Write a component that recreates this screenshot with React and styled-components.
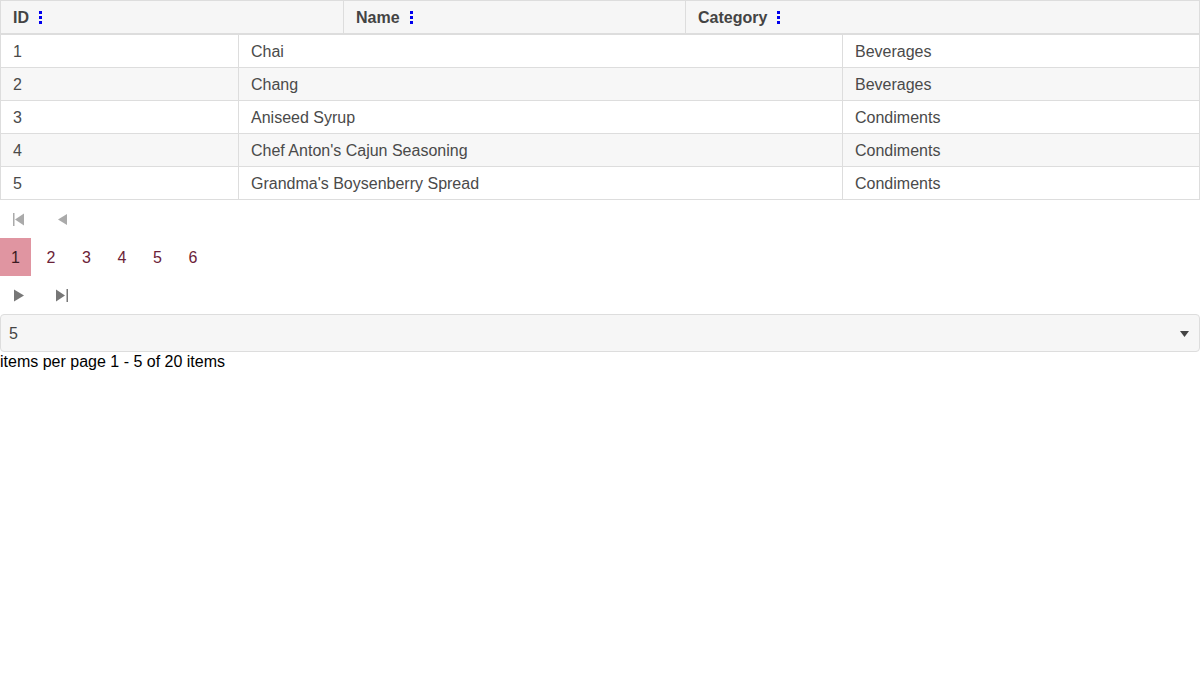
import React, { useState } from "react";
import styled, { createGlobalStyle } from "styled-components";

const GlobalStyle = createGlobalStyle`
  body {
    margin: 0;
    font-family: "Liberation Sans", Arial, sans-serif;
    font-size: 16px;
    background: #fff;
  }
`;

const Grid = styled.div`
  display: grid;
  grid-template-columns: ${props => props.cols};
  border-left: 1px solid #ddd;
  border-right: 1px solid #ddd;
`;

const HeadCell = styled.div`
  height: 31px;
  padding: 1px 12px 0;
  display: flex;
  align-items: center;
  gap: 10px;
  background: #f6f6f6;
  color: #444;
  font-weight: 700;
  border-top: 1px solid #ddd;
  border-bottom: 2px solid #ddd;
  border-left: ${props => (props.first ? "none" : "1px solid #ddd")};
`;

const Cell = styled.div`
  height: 31px;
  padding: 1px 12px 0;
  display: flex;
  align-items: center;
  color: #4a4a4a;
  background: ${props => (props.alt ? "#f7f7f7" : "#fff")};
  border-bottom: 1px solid #ddd;
  border-left: ${props => (props.first ? "none" : "1px solid #ddd")};
`;

const IconRow = styled.div`
  display: flex;
  height: 38px;
  gap: 5px;
`;

const IconButton = styled.button`
  width: 38px;
  height: 38px;
  padding: 0;
  border: none;
  background: transparent;
  display: flex;
  align-items: center;
  justify-content: center;
  color: ${props => (props.disabled ? "#aaa" : "#777")};
`;

const Pages = styled.div`
  display: flex;
  gap: 4.5px;
  height: 38px;
`;

const PageButton = styled.button`
  width: 31px;
  height: 38px;
  padding: 1px 0 0;
  border: none;
  font-family: inherit;
  font-size: 16px;
  color: ${props => (props.active ? "#3a1a22" : "#6b2238")};
  background: ${props => (props.active ? "#e095a1" : "transparent")};
`;

const Select = styled.div`
  box-sizing: border-box;
  height: 38px;
  border: 1px solid #ddd;
  border-radius: 4px;
  background: #f6f6f6;
  display: flex;
  align-items: center;
  justify-content: space-between;
  padding: 2px 10px 0 8px;
  color: #444;
`;

const Info = styled.div`
  color: #000;
  line-height: 19px;
`;

const Dots = () => (
  <svg width="3" height="13" viewBox="0 0 3 13">
    <rect x="0" y="0" width="3" height="3" fill="#0000ee" />
    <rect x="0" y="5" width="3" height="3" fill="#0000ee" />
    <rect x="0" y="10" width="3" height="3" fill="#0000ee" />
  </svg>
);

const First = () => (
  <svg width="12" height="13" viewBox="0 0 12 13" fill="currentColor">
    <rect x="0" y="0" width="1.5" height="13" />
    <polygon points="11,0.5 11,12.5 2,6.5" />
  </svg>
);

const Prev = () => (
  <svg width="10" height="13" viewBox="0 0 10 13" fill="currentColor">
    <polygon points="10,1 10,12 1,6.5" />
  </svg>
);

const Next = () => (
  <svg width="10" height="13" viewBox="0 0 10 13" fill="currentColor">
    <polygon points="0,0.5 0,12.5 10,6.5" />
  </svg>
);

const Last = () => (
  <svg width="12" height="13" viewBox="0 0 12 13" fill="currentColor">
    <polygon points="0,0.5 0,12.5 9,6.5" />
    <rect x="10.5" y="0" width="1.5" height="13" />
  </svg>
);

const products = [
  { id: 1, name: "Chai", category: "Beverages" },
  { id: 2, name: "Chang", category: "Beverages" },
  { id: 3, name: "Aniseed Syrup", category: "Condiments" },
  { id: 4, name: "Chef Anton's Cajun Seasoning", category: "Condiments" },
  { id: 5, name: "Grandma's Boysenberry Spread", category: "Condiments" },
];

const App = () => {
  const [page, setPage] = useState(1);

  return (
    <>
      <GlobalStyle />
      <Grid cols="342px 342px 1fr">
        <HeadCell first>ID <Dots /></HeadCell>
        <HeadCell>Name <Dots /></HeadCell>
        <HeadCell>Category <Dots /></HeadCell>
      </Grid>
      <Grid cols="237px 604px 1fr">
        {products.map((p, i) => (
          <React.Fragment key={p.id}>
            <Cell first alt={i % 2 === 1}>{p.id}</Cell>
            <Cell alt={i % 2 === 1}>{p.name}</Cell>
            <Cell alt={i % 2 === 1}>{p.category}</Cell>
          </React.Fragment>
        ))}
      </Grid>
      <IconRow>
        <IconButton disabled><First /></IconButton>
        <IconButton disabled><Prev /></IconButton>
      </IconRow>
      <Pages>
        {[1, 2, 3, 4, 5, 6].map(n => (
          <PageButton key={n} active={n === page} onClick={() => setPage(n)}>
            {n}
          </PageButton>
        ))}
      </Pages>
      <IconRow>
        <IconButton><Next /></IconButton>
        <IconButton><Last /></IconButton>
      </IconRow>
      <Select>
        <span>5</span>
        <svg width="9" height="6" viewBox="0 0 9 6">
          <polygon points="0,0 9,0 4.5,6" fill="#444" />
        </svg>
      </Select>
      <Info>items per page 1 - 5 of 20 items</Info>
    </>
  );
};

export default App;
